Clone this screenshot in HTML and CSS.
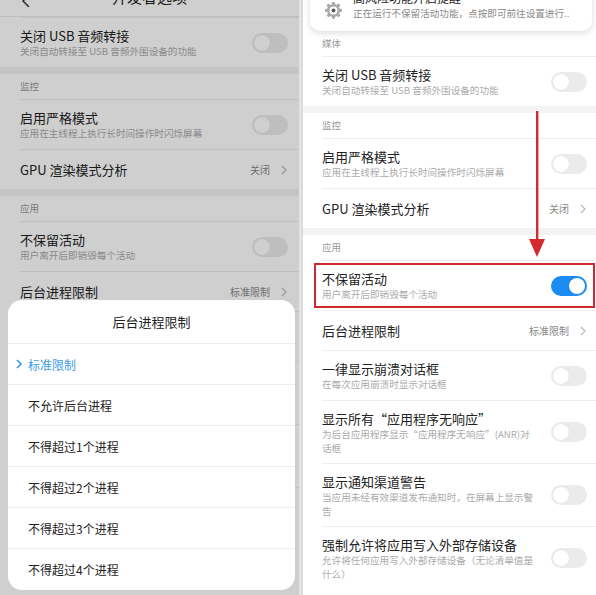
FILE: index.html
```html
<!DOCTYPE html>
<html lang="zh-CN">
<head>
  <meta charset="UTF-8">
  <meta name="viewport" content="width=device-width, initial-scale=1.0">
  <title>开发者选项</title>
  <link rel="stylesheet" href="styles.css">
</head>
<body>
  <div class="screens">
    <!-- left: dialog open -->
    <div class="screen screen-left">
      <div class="topbar">
        <svg class="back" width="8" height="12" viewBox="0 0 8 12"><polyline points="7,0 1,6 7,12" fill="none" stroke="#333" stroke-width="1.5"/></svg>
        <span class="topbar-title">开发者选项</span>
      </div>
      <div class="row">
        <div class="text">
          <div class="title">关闭 USB 音频转接</div>
          <div class="desc">关闭自动转接至 USB 音频外围设备的功能</div>
        </div>
        <span class="toggle"></span>
      </div>
      <div class="gap"></div>
      <div class="section">监控</div>
      <div class="row">
        <div class="text">
          <div class="title">启用严格模式</div>
          <div class="desc">应用在主线程上执行长时间操作时闪烁屏幕</div>
        </div>
        <span class="toggle"></span>
      </div>
      <div class="row single">
        <div class="text"><div class="title">GPU 渲染模式分析</div></div>
        <span class="value">关闭</span>
        <svg class="chev" width="6" height="10" viewBox="0 0 6 10"><polyline points="1,1 5,5 1,9" fill="none" stroke="#bbb" stroke-width="1.2"/></svg>
      </div>
      <div class="gap"></div>
      <div class="section">应用</div>
      <div class="row">
        <div class="text">
          <div class="title">不保留活动</div>
          <div class="desc">用户离开后即销毁每个活动</div>
        </div>
        <span class="toggle"></span>
      </div>
      <div class="row single">
        <div class="text"><div class="title">后台进程限制</div></div>
        <span class="value">标准限制</span>
        <svg class="chev" width="6" height="10" viewBox="0 0 6 10"><polyline points="1,1 5,5 1,9" fill="none" stroke="#bbb" stroke-width="1.2"/></svg>
      </div>
      <div class="row">
        <div class="text">
          <div class="title">一律显示崩溃对话框</div>
          <div class="desc">在每次应用崩溃时显示对话框</div>
        </div>
        <span class="toggle"></span>
      </div>
      <div class="row double">
        <div class="text">
          <div class="title">显示所有“应用程序无响应”</div>
          <div class="desc">为后台应用程序显示“应用程序无响应”(ANR)对话框</div>
        </div>
        <span class="toggle"></span>
      </div>
      <div class="row double">
        <div class="text">
          <div class="title">显示通知渠道警告</div>
          <div class="desc">当应用未经有效渠道发布通知时，在屏幕上显示警告</div>
        </div>
        <span class="toggle"></span>
      </div>
      <div class="row double">
        <div class="text">
          <div class="title">强制允许将应用写入外部存储设备</div>
          <div class="desc">允许将任何应用写入外部存储设备（无论清单值是什么）</div>
        </div>
        <span class="toggle"></span>
      </div>

      <div class="mask"></div>
      <div class="dialog">
        <div class="dialog-title">后台进程限制</div>
        <div class="option selected">
          <svg class="option-mark" width="6" height="10" viewBox="0 0 6 10"><polyline points="1,1 5,5 1,9" fill="none" stroke="#3d9be3" stroke-width="1.6"/></svg>
          标准限制
        </div>
        <div class="option">不允许后台进程</div>
        <div class="option">不得超过1个进程</div>
        <div class="option">不得超过2个进程</div>
        <div class="option">不得超过3个进程</div>
        <div class="option">不得超过4个进程</div>
      </div>
    </div>

    <!-- right: option enabled -->
    <div class="screen screen-right">
      <div class="notice">
        <svg class="gear" width="19" height="19" viewBox="0 0 20 20">
          <path d="M8.6 1h2.8l.4 2.3 1.6.7 1.9-1.4 2 2-1.4 1.9.7 1.6 2.3.4v2.8l-2.3.4-.7 1.6 1.4 1.9-2 2-1.9-1.4-1.6.7-.4 2.3H8.6l-.4-2.3-1.6-.7-1.9 1.4-2-2 1.4-1.9-.7-1.6L1 11.4V8.6l2.3-.4.7-1.6-1.4-1.9 2-2 1.9 1.4 1.6-.7z" fill="#a9a9a9"/>
          <circle cx="10" cy="10" r="4.2" fill="#fff"/>
          <circle cx="10" cy="10" r="2" fill="#555"/>
        </svg>
        <div class="notice-text">
          <div class="notice-title">高风险功能开启提醒</div>
          <div class="notice-desc">正在运行不保留活动功能，点按即可前往设置进行..</div>
        </div>
      </div>
      <div class="section">媒体</div>
      <div class="row">
        <div class="text">
          <div class="title">关闭 USB 音频转接</div>
          <div class="desc">关闭自动转接至 USB 音频外围设备的功能</div>
        </div>
        <span class="toggle"></span>
      </div>
      <div class="gap"></div>
      <div class="section">监控</div>
      <div class="row">
        <div class="text">
          <div class="title">启用严格模式</div>
          <div class="desc">应用在主线程上执行长时间操作时闪烁屏幕</div>
        </div>
        <span class="toggle"></span>
      </div>
      <div class="row single">
        <div class="text"><div class="title">GPU 渲染模式分析</div></div>
        <span class="value">关闭</span>
        <svg class="chev" width="6" height="10" viewBox="0 0 6 10"><polyline points="1,1 5,5 1,9" fill="none" stroke="#bbb" stroke-width="1.2"/></svg>
      </div>
      <div class="gap"></div>
      <div class="section">应用</div>
      <div class="row marked">
        <div class="text">
          <div class="title">不保留活动</div>
          <div class="desc">用户离开后即销毁每个活动</div>
        </div>
        <span class="toggle on"></span>
      </div>
      <div class="row single">
        <div class="text"><div class="title">后台进程限制</div></div>
        <span class="value">标准限制</span>
        <svg class="chev" width="6" height="10" viewBox="0 0 6 10"><polyline points="1,1 5,5 1,9" fill="none" stroke="#bbb" stroke-width="1.2"/></svg>
      </div>
      <div class="row">
        <div class="text">
          <div class="title">一律显示崩溃对话框</div>
          <div class="desc">在每次应用崩溃时显示对话框</div>
        </div>
        <span class="toggle"></span>
      </div>
      <div class="row double">
        <div class="text">
          <div class="title">显示所有“应用程序无响应”</div>
          <div class="desc">为后台应用程序显示“应用程序无响应”(ANR)对话框</div>
        </div>
        <span class="toggle"></span>
      </div>
      <div class="row double">
        <div class="text">
          <div class="title">显示通知渠道警告</div>
          <div class="desc">当应用未经有效渠道发布通知时，在屏幕上显示警告</div>
        </div>
        <span class="toggle"></span>
      </div>
      <div class="row double">
        <div class="text">
          <div class="title">强制允许将应用写入外部存储设备</div>
          <div class="desc">允许将任何应用写入外部存储设备（无论清单值是什么）</div>
        </div>
        <span class="toggle"></span>
      </div>

      <svg class="arrow" width="18" height="148" viewBox="0 0 18 148">
        <rect x="8" y="0" width="2.4" height="132" fill="#d42a2f"/>
        <polygon points="1,128 17,128 9,146" fill="#d42a2f"/>
      </svg>
    </div>
  </div>
</body>
</html>
```

FILE: styles.css
```css
body {
  margin: 0;
  padding: 0;
  font-family: 'Noto Sans CJK SC', 'Noto Sans', sans-serif;
  background: #e4e4e4;
  color: #222;
}
.screens {
  display: flex;
  gap: 2px;
  width: 596px;
  height: 595px;
}
.screen {
  position: relative;
  overflow: hidden;
  background: #fff;
  height: 595px;
}
.screen-left {
  width: 299px;
  --pad-l: 20px;
  --pad-r: 11px;
}
.screen-right {
  flex: 1;
  --pad-l: 19px;
  --pad-r: 9px;
  border-left: 2px solid #dcdcdc;
}
.topbar {
  height: 16px;
  border-bottom: 1px solid #ececec;
  display: flex;
  align-items: flex-end;
  padding-left: 22px;
  overflow: hidden;
}
.topbar .back {
  margin-bottom: 9px;
}
.topbar-title {
  flex: 1;
  text-align: center;
  font-size: 15px;
  line-height: 20px;
  margin-bottom: 9px;
  margin-right: 30px;
}
.section {
  height: 25px;
  line-height: 25px;
  padding-left: var(--pad-l);
  font-size: 9.5px;
  color: #9a9a9a;
}
.gap {
  height: 7px;
  background: #f3f3f3;
}
.row {
  position: relative;
  display: flex;
  align-items: center;
  margin-left: var(--pad-l);
  padding-right: var(--pad-r);
  height: 49px;
  border-top: 1px solid #eeeeee;
}
.row.single {
  height: 39px;
}
.row.double {
  height: 62px;
}
.text {
  flex: 1;
  min-width: 0;
}
.title {
  font-size: 13px;
  line-height: 17px;
}
.desc {
  font-size: 9.6px;
  line-height: 14px;
  color: #ababab;
  padding-right: 14px;
}
.value {
  font-size: 10px;
  color: #888;
  margin-right: 11px;
}
.chev {
  margin-right: 1px;
}
.toggle {
  position: relative;
  flex: none;
  width: 36px;
  height: 20px;
  border-radius: 10px;
  background: #ebebeb;
}
.toggle::after {
  content: '';
  position: absolute;
  top: 2px;
  left: 2px;
  width: 16px;
  height: 16px;
  border-radius: 50%;
  background: #fff;
  box-shadow: 0 0 1px rgba(0, 0, 0, 0.12);
}
.toggle.on {
  background: #1b8cf1;
}
.toggle.on::after {
  left: 18px;
}
.row.marked::after {
  content: '';
  position: absolute;
  left: -8px;
  right: 1px;
  top: 2px;
  bottom: 2px;
  border: 2px solid #cf2a30;
}
.notice {
  display: flex;
  align-items: center;
  margin: -21px 4px 0 7px;
  padding: 10px 12px 11px 14px;
  background: #fff;
  border-radius: 10px;
  box-shadow: 0 2px 7px rgba(0, 0, 0, 0.14);
}
.gear {
  flex: none;
  margin-right: 10px;
  margin-top: 12px;
}
.notice-title {
  font-size: 12px;
  line-height: 17px;
}
.notice-desc {
  font-size: 9.6px;
  line-height: 14px;
  color: #8a8a8a;
  white-space: nowrap;
}
.arrow {
  position: absolute;
  left: 225px;
  top: 111px;
}
.mask {
  position: absolute;
  top: 0;
  left: 0;
  right: 0;
  bottom: 0;
  background: rgba(0, 0, 0, 0.19);
}
.dialog {
  position: absolute;
  left: 8px;
  right: 4px;
  top: 300px;
  height: 290px;
  background: #fff;
  border-radius: 14px;
  overflow: hidden;
}
.dialog-title {
  height: 43px;
  line-height: 43px;
  text-align: center;
  font-size: 13px;
}
.option {
  display: flex;
  align-items: center;
  height: 40px;
  border-top: 1px solid #eeeeee;
  padding-left: 20px;
  font-size: 12px;
}
.option.selected {
  position: relative;
  color: #3d9be3;
}
.option-mark {
  position: absolute;
  left: 8px;
}
```
